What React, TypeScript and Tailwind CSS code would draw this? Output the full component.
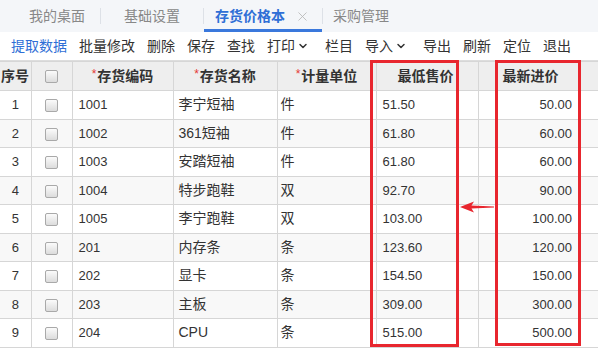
import { ChevronDown, X } from 'lucide-react'

const cn = '"Liberation Sans", "Noto Sans CJK SC", sans-serif'

const rows = [
  ['1', '1001', '李宁短袖', '件', '51.50', '50.00'],
  ['2', '1002', '361短袖', '件', '61.80', '60.00'],
  ['3', '1003', '安踏短袖', '件', '61.80', '60.00'],
  ['4', '1004', '特步跑鞋', '双', '92.70', '90.00'],
  ['5', '1005', '李宁跑鞋', '双', '103.00', '100.00'],
  ['6', '201', '内存条', '条', '123.60', '120.00'],
  ['7', '202', '显卡', '条', '154.50', '150.00'],
  ['8', '203', '主板', '条', '309.00', '300.00'],
  ['9', '204', 'CPU', '条', '515.00', '500.00'],
]

const tools = ['提取数据', '批量修改', '删除', '保存', '查找', '打印', '栏目', '导入', '导出', '刷新', '定位', '退出']

function Box() {
  return <span className="inline-block w-[13px] h-[13px] rounded-[2px] border border-[#a9a9a9] bg-gradient-to-b from-[#fbfbfb] to-[#dcdcdc] align-middle" />
}

function Star() {
  return <span className="text-[#e53935] font-normal text-[12px] relative -top-[3px] mr-[1px]">*</span>
}

export default function App() {
  return (
    <div className="relative w-[598px] h-[348px] overflow-hidden bg-white text-[#333]" style={{ fontFamily: cn }}>
      {/* tabs */}
      <div className="h-[32px] bg-[#f4f6f9] flex items-stretch text-[14px] text-[#888]">
        <div className="w-[100px] flex items-center justify-center pl-[14px]">我的桌面</div>
        <div className="w-px bg-[#dde1e7] my-[8px]" />
        <div className="w-[102px] flex items-center justify-center">基础设置</div>
        <div className="w-px bg-[#dde1e7] my-[8px]" />
        <div className="w-[118px] flex items-center pl-[11px] gap-[10px] border-b-[3px] border-[#3a78dc] pt-[3px]">
          <span className="text-[#2f6fd6] font-bold">存货价格本</span>
          <X size={15} strokeWidth={1.3} className="text-[#b5b5b5]" />
        </div>
        <div className="w-px bg-[#dde1e7] my-[8px]" />
        <div className="flex items-center pl-[10px]">采购管理</div>
      </div>
      {/* toolbar */}
      <div className="h-[29px] flex items-center pl-[11px] gap-[12px] text-[14px] text-[#333] border-b border-[#ddd]">
        {tools.map((t, i) => (
          <span key={t} className={`flex items-center ${i === 0 ? 'text-[#2f6fd6]' : ''} ${t === '打印' || t === '导入' ? 'gap-[2px] mr-[4px]' : ''}`}>
            {t}
            {(t === '打印' || t === '导入') && <ChevronDown size={12} strokeWidth={3} />}
          </span>
        ))}
      </div>
      {/* table */}
      <table className="border-collapse table-fixed w-[598px] text-[13px] text-[#333]">
        <colgroup>
          <col className="w-[31px]" />
          <col className="w-[41px]" />
          <col className="w-[101px]" />
          <col className="w-[104px]" />
          <col className="w-[99px]" />
          <col className="w-[102px]" />
          <col />
        </colgroup>
        <thead>
          <tr className="h-[29px] bg-[#eeeeee] text-[14px] font-bold text-[#333]">
            <th className="border border-[#d6d6d6] border-l-0 text-left pl-[1px]">序号</th>
            <th className="border border-[#d6d6d6]"><Box /></th>
            <th className="border border-[#d6d6d6] text-center"><Star />存货编码</th>
            <th className="border border-[#d6d6d6] text-center"><Star />存货名称</th>
            <th className="border border-[#d6d6d6] text-center"><Star />计量单位</th>
            <th className="border border-[#d6d6d6] text-right pr-[24px]">最低售价</th>
            <th className="border border-[#d6d6d6] border-r-0 text-left pl-[24px]">最新进价</th>
          </tr>
        </thead>
        <tbody>
          {rows.map((r, i) => (
            <tr key={r[0]} className={`h-[28.5px] ${i % 2 === 1 ? 'bg-[#f8f8f8]' : 'bg-white'}`}>
              <td className="border border-[#d6d6d6] border-l-0 text-center">{r[0]}</td>
              <td className="border border-[#d6d6d6] text-center"><Box /></td>
              <td className="border border-[#d6d6d6] pl-[6px]">{r[1]}</td>
              <td className="border border-[#d6d6d6] pl-[5px] text-[14px]">{r[2]}</td>
              <td className="border border-[#d6d6d6] pl-[3px] text-[14px]">{r[3]}</td>
              <td className="border border-[#d6d6d6] pl-[6px]">{r[4]}</td>
              <td className="border border-[#d6d6d6] border-r-0 text-right pr-[26px]">{r[5]}</td>
            </tr>
          ))}
        </tbody>
      </table>
      {/* highlight overlays */}
      <div className="absolute left-[370px] top-[60px] w-[89px] h-[287px] border-[3px] border-[#e8262e]" />
      <div className="absolute left-[495px] top-[60px] w-[86px] h-[286px] border-[3px] border-[#e8262e]" />
      <svg className="absolute left-[459px] top-[200px]" width="36" height="14" viewBox="0 0 36 14">
        <polygon points="1,7 15,1.5 12.5,5.5 35,6.4 35,7.6 12.5,8.5 15,12.5" fill="#e8262e" />
      </svg>
    </div>
  )
}
